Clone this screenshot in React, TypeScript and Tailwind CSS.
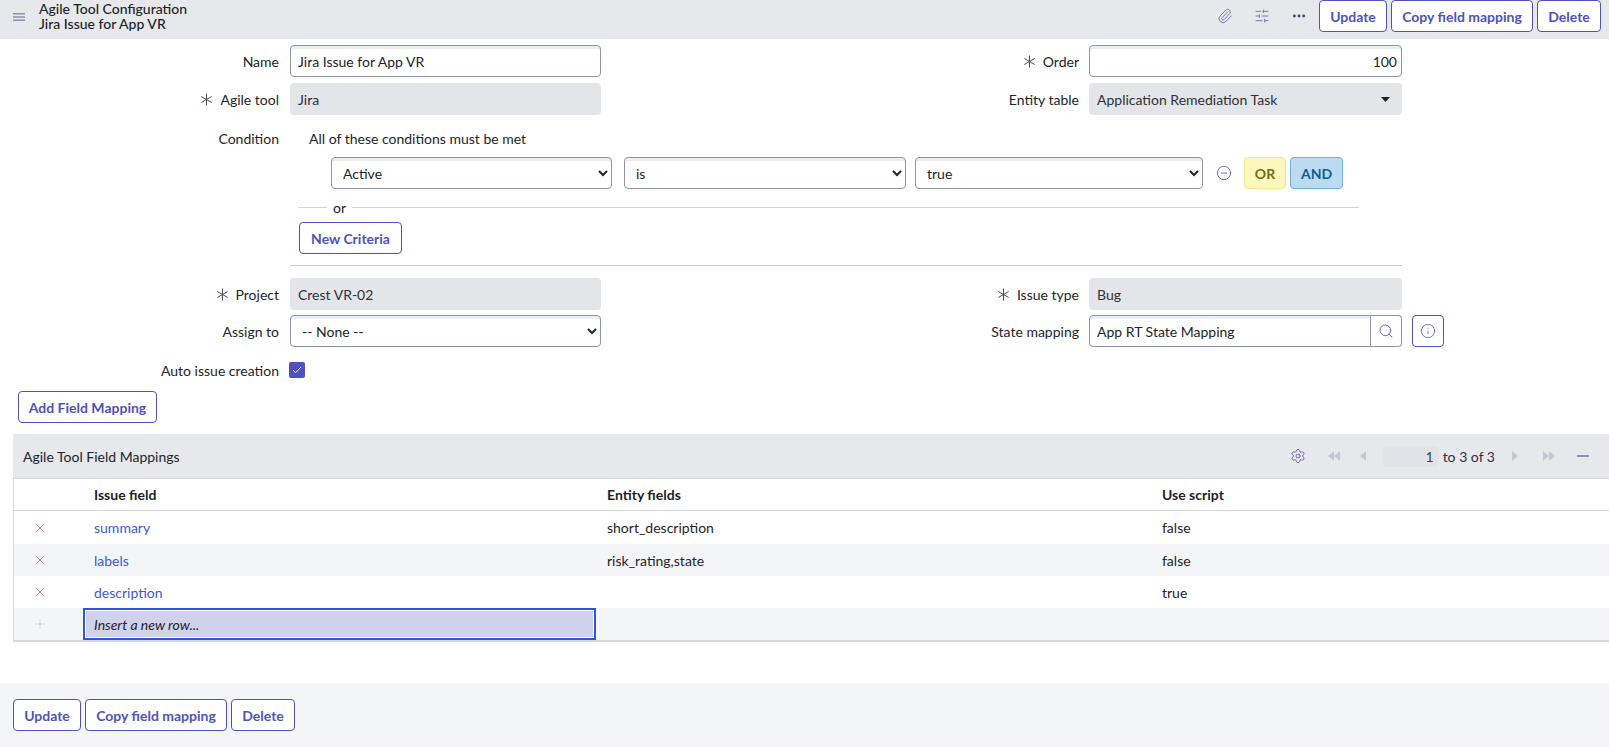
import type React from 'react';
import { CircleMinus, Ellipsis, Info, Paperclip, Plus, Search, Settings, SlidersHorizontal, X } from 'lucide-react';

const outlineBtn =
  'h-8 rounded-[4px] border border-[#4f52bd] bg-white text-[14px] font-bold text-[#4f52bd] flex items-center justify-center';
const editBox =
  'h-8 w-full rounded-[4px] border border-[#8f93a6] bg-white px-[7px] text-[14px] text-[#22242c] shadow-[inset_0_3px_0_#eceef1] outline-none';
const grayBox = 'h-8 w-full rounded-[4px] bg-[#e4e5e9] px-[8px] text-[14px] text-[#2e3038] flex items-center';

const Required = () => (
  <svg width="13" height="13" viewBox="0 0 13 13" className="mr-[7px] shrink-0" stroke="#4a4d5c" strokeWidth="1">
    <path d="M6.5 0.5v12M1.3 3.5l10.4 6M11.7 3.5l-10.4 6" />
  </svg>
);

const Label: React.FC<{ text: string; required?: boolean; className: string }> = ({ text, required, className }) => (
  <div className={`flex items-center justify-end text-[14px] text-[#22242c] ${className}`}>
    {required && <Required />}
    <span>{text}</span>
  </div>
);

const Tri: React.FC<{ dir: 'l' | 'r' }> = ({ dir }) => (
  <svg width="6" height="10" viewBox="0 0 6 10" fill="#c5c7d4">
    <path d={dir === 'l' ? 'M6 0v10L0 5z' : 'M0 0v10l6-5z'} />
  </svg>
);

const ActionButtons = () => (
  <div className="flex gap-[4px]">
    <button type="button" className={`${outlineBtn} w-[68px]`}>Update</button>
    <button type="button" className={`${outlineBtn} w-[142px]`}>Copy field mapping</button>
    <button type="button" className={`${outlineBtn} w-[64px]`}>Delete</button>
  </div>
);

const rows = [
  { field: 'summary', entity: 'short_description', script: 'false', bg: 'bg-white', h: 'h-[33px]' },
  { field: 'labels', entity: 'risk_rating,state', script: 'false', bg: 'bg-[#f4f5f7]', h: 'h-[32px]' },
  { field: 'description', entity: '', script: 'true', bg: 'bg-white', h: 'h-[32px]' },
];

export default function App() {
  return (
    <div className="flex h-[747px] w-[1609px] flex-col overflow-hidden bg-white font-['Lato',sans-serif] text-[14px] text-[#22242c]">
      {/* header */}
      <div className="flex h-[39px] shrink-0 items-start bg-[#e6e8ec] pr-[8px]">
        <svg width="12" height="10" viewBox="0 0 12 10" className="ml-[13px] mt-[12px]" fill="#8c8fb0">
          <path d="M0 1h12v1.4H0zM0 4.3h12v1.4H0zM0 7.6h12V9H0z" />
        </svg>
        <div className="ml-[14px] mt-[1px] text-[14px] font-medium leading-[15px] text-[#1d1f26]">
          <div>Agile Tool Configuration</div>
          <div>Jira Issue for App VR</div>
        </div>
        <div className="ml-auto flex items-center">
          <Paperclip size={16} strokeWidth={1.4} className="mr-[21px] text-[#6f72ab]" />
          <SlidersHorizontal size={16} strokeWidth={1.4} className="mr-[21px] text-[#6f72ab]" />
          <Ellipsis size={16} strokeWidth={2.2} className="mr-[12px] text-[#3f4277]" />
          <ActionButtons />
        </div>
      </div>

      {/* form */}
      <div className="flex w-[1402px] shrink-0 flex-col pt-[6px]">
        <div className="flex h-8">
          <div className="flex w-[601px]">
            <Label text="Name" className="w-[279px]" />
            <input readOnly defaultValue="Jira Issue for App VR" className={`${editBox} ml-[11px] !w-[311px]`} />
          </div>
          <Label text="Order" required className="w-[478px]" />
          <input readOnly defaultValue="100" className={`${editBox} ml-[10px] !w-[313px] text-right !pr-[4px]`} />
        </div>
        <div className="mt-[6px] flex h-8">
          <div className="flex w-[601px]">
            <Label text="Agile tool" required className="w-[279px]" />
            <div className={`${grayBox} ml-[11px] !w-[311px]`}>Jira</div>
          </div>
          <Label text="Entity table" className="w-[478px]" />
          <div className={`${grayBox} ml-[10px] !w-[313px] justify-between pr-[12px]`}>
            <span>Application Remediation Task</span>
            <svg width="9" height="5" viewBox="0 0 9 5" fill="#1d1f26"><path d="M0 0h9L4.5 5z" /></svg>
          </div>
        </div>

        {/* condition builder */}
        <div className="mt-[13px] flex h-[20px] items-center">
          <Label text="Condition" className="w-[279px]" />
          <span className="ml-[30px]">All of these conditions must be met</span>
        </div>
        <div className="ml-[331px] mt-[9px] flex h-8 items-center">
          <select className={`${editBox} !w-[281px]`} defaultValue="Active"><option>Active</option></select>
          <select className={`${editBox} ml-[12px] !w-[282px]`} defaultValue="is"><option>is</option></select>
          <select className={`${editBox} ml-[9px] !w-[288px]`} defaultValue="true"><option>true</option></select>
          <CircleMinus size={16} strokeWidth={1.2} className="ml-[13px] text-[#4f5290]" />
          <div className="ml-[12px] flex h-8 w-[42px] items-center justify-center rounded-[4px] border border-[#f2e98c] bg-[#fbf7bd] font-bold text-[#736c10]">OR</div>
          <div className="ml-[4px] flex h-8 w-[53px] items-center justify-center rounded-[4px] border border-[#6fb2e3] bg-[#bcdbf1] font-bold text-[#0b5c99]">AND</div>
        </div>
        <div className="ml-[298px] mt-[9px] flex h-[18px] w-[1061px] items-center">
          <div className="h-px w-[29px] bg-[#d3d5dc]" />
          <span className="mx-[6px]">or</span>
          <div className="h-px flex-1 bg-[#d3d5dc]" />
        </div>
        <button type="button" className={`${outlineBtn} ml-[299px] mt-[6px] w-[103px]`}>New Criteria</button>
        <div className="ml-[290px] mt-[11px] h-px bg-[#c8cad2]" />

        <div className="mt-[12px] flex h-8">
          <div className="flex w-[601px]">
            <Label text="Project" required className="w-[279px]" />
            <div className={`${grayBox} ml-[11px] !w-[311px]`}>Crest VR-02</div>
          </div>
          <Label text="Issue type" required className="w-[478px]" />
          <div className={`${grayBox} ml-[10px] !w-[313px]`}>Bug</div>
        </div>
        <div className="mt-[5px] flex h-8">
          <div className="flex w-[601px]">
            <Label text="Assign to" className="w-[279px]" />
            <select className={`${editBox} ml-[11px] !w-[311px]`} defaultValue="-- None --"><option>-- None --</option></select>
          </div>
          <Label text="State mapping" className="w-[478px]" />
          <div className="relative ml-[10px] flex w-[313px]">
            <input readOnly defaultValue="App RT State Mapping" className={`${editBox} !w-[282px] rounded-r-none`} />
            <div className="flex h-8 flex-1 items-center justify-center rounded-r-[4px] border border-l-0 border-[#8f93a6]">
              <Search size={16} strokeWidth={1.3} className="text-[#4f52bd]" />
            </div>
            <div className="absolute left-[323px] top-0 flex h-8 w-8 items-center justify-center rounded-[4px] border border-[#4f52bd]">
              <Info size={16} strokeWidth={1.2} className="text-[#4f52bd]" />
            </div>
          </div>
        </div>
        <div className="mt-[15px] flex h-4">
          <Label text="Auto issue creation" className="w-[279px]" />
          <div className="ml-[10px] flex h-4 w-4 items-center justify-center rounded-[2px] bg-[#4f52bd]">
            <svg width="10" height="8" viewBox="0 0 10 8" fill="none" stroke="#fff" strokeWidth="0.9"><path d="M1 4l2.6 2.8L9 1" /></svg>
          </div>
        </div>
        <button type="button" className={`${outlineBtn} ml-[18px] mt-[13px] w-[139px]`}>Add Field Mapping</button>
      </div>

      {/* related list */}
      <div className="ml-[13px] mt-[11px] shrink-0">
        <div className="flex h-[45px] items-center border-b border-[#d6d8de] bg-[#e6e8ec] pl-[10px] pr-[20px]">
          <span>Agile Tool Field Mappings</span>
          <div className="ml-auto flex items-center">
            <Settings size={16} strokeWidth={1.2} className="mr-[22px] text-[#4f5290]" />
            <span className="mr-[20px] flex"><Tri dir="l" /><Tri dir="l" /></span>
            <span className="mr-[17px] flex"><Tri dir="l" /></span>
            <div className="mr-[4px] flex h-[21px] w-[56px] items-center justify-end rounded-[4px] bg-[#e2e3e8] pr-[5px] text-[#3d4048]">1</div>
            <span className="mr-[17px] text-[#2e3038]">to 3 of 3</span>
            <span className="mr-[25px] flex"><Tri dir="r" /></span>
            <span className="mr-[22px] flex"><Tri dir="r" /><Tri dir="r" /></span>
            <div className="h-[2px] w-[12px] bg-[#8c8fb0]" />
          </div>
        </div>
        <div className="border-b-[2px] border-l border-[#d6d8de]">
          <div className="grid h-[32px] grid-cols-[70px_523px_555px_1fr] items-center border-b border-[#d6d8de] text-[14px] font-bold text-[#1d1f26]">
            <span />
            <span className="pl-[10px]">Issue field</span>
            <span className="pl-[0px]">Entity fields</span>
            <span>Use script</span>
          </div>
          {rows.map((row) => (
            <div key={row.field} className={`grid grid-cols-[70px_523px_555px_1fr] items-center ${row.h} ${row.bg}`}>
              <span className="pl-[19px]"><X size={14} strokeWidth={1.2} className="text-[#f0524f]" /></span>
              <span className="pl-[10px] text-[#3b58e0]">{row.field}</span>
              <span>{row.entity}</span>
              <span>{row.script}</span>
            </div>
          ))}
          <div className="grid h-[32px] grid-cols-[69px_513px_1fr] items-center bg-[#f4f5f7]">
            <span className="pl-[19px]"><Plus size={14} strokeWidth={1} className="text-[#b9bbc4]" /></span>
            <div className="flex h-[32px] items-center border-[2px] border-[#2f54e0] bg-[#d0d2ec] pl-[9px] italic outline outline-1 -outline-offset-[3px] outline-white">Insert a new row...</div>
            <span />
          </div>
        </div>
      </div>

      {/* footer */}
      <div className="mt-auto flex h-[64px] shrink-0 items-center bg-[#f4f5f7] pl-[13px]">
        <ActionButtons />
      </div>
    </div>
  );
}
